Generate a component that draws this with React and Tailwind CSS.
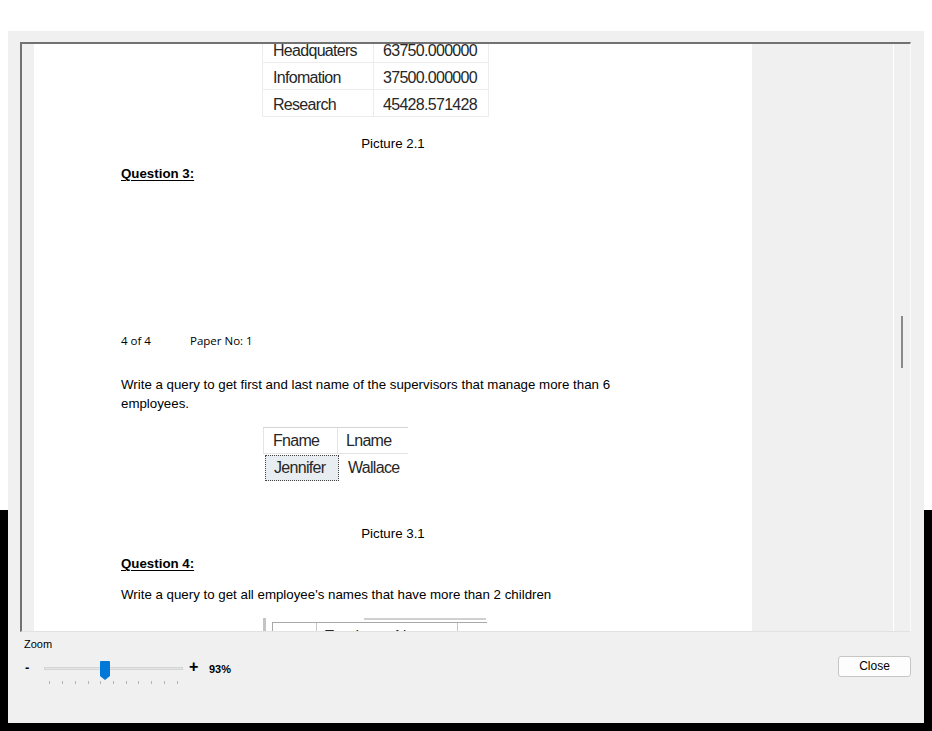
import React from 'react';

const ticks = Array.from({ length: 11 }, (_, k) => Math.round(6.3 + 12.74 * k) + 0.5);

function ZoomSlider() {
  return (
    <svg width="140" height="25" viewBox="0 0 140 25">
      <rect x="1.5" y="7.5" width="138" height="2" fill="#e7e7e7" stroke="#d4d4d4" />
      {ticks.map((x) => (
        <line key={x} x1={x} y1="21" x2={x} y2="24" stroke="#b4b4b4" strokeWidth="1" />
      ))}
      <path d="M57 2 Q57 1 58 1 H66 Q67 1 67 2 V16 L62 20 L57 16 Z" fill="#0078d7" />
    </svg>
  );
}

function SalaryTable() {
  const rows = [
    ['Headquaters', '63750.000000'],
    ['Infomation', '37500.000000'],
    ['Research', '45428.571428'],
  ];
  return (
    <div className="ml-[141px] w-[227px] border-l border-r border-[#ececec] text-[16px] tracking-[-0.7px] text-[#262626]">
      {rows.map(([dept, avg]) => (
        <div key={dept} className="flex h-[27px] border-b border-[#ececec]">
          <div className="w-[111px] border-r border-[#ececec] pl-[10px] pt-[3px] flex items-center">{dept}</div>
          <div className="pl-[9px] pt-[3px] flex items-center">{avg}</div>
        </div>
      ))}
    </div>
  );
}

function SupervisorTable() {
  return (
    <div className="ml-[142px] w-[145px] border-t border-[#d4d4d4] text-[16px] tracking-[-0.7px] text-[#262626]">
      <div className="flex h-[26px] border-b border-l border-[#e4e4e4]">
        <div className="w-[74px] border-r border-[#e4e4e4] pl-[9px] pt-[1px] flex items-center">Fname</div>
        <div className="pl-[8px] pt-[1px] flex items-center">Lname</div>
      </div>
      <div className="flex h-[27px]">
        <div className="w-[76px] pl-[2px] pt-[1px] flex">
          <div className="w-[74px] h-[26px] bg-[#e8edf2] border border-dotted border-[#444] pl-[8px] flex items-center">
            Jennifer
          </div>
        </div>
        <div className="pl-[9px] flex items-center">Wallace</div>
      </div>
    </div>
  );
}

function ChildrenTable() {
  return (
    <div className="ml-[142px] flex">
      <div className="w-[3px] h-[24px] bg-[#c4c4c4]" />
      <div className="ml-[6px] flex flex-col">
        <div className="ml-[92px] w-[122px] h-[2px] bg-[#d0d0d0]" />
        <div className="mt-[2px] flex border-t border-l border-[#a8a8a8] h-[20px] text-[16px] tracking-[-0.5px] text-[#262626]">
          <div className="w-[44px] border-r border-[#c8c8c8]" />
          <div className="w-[141px] border-r border-[#c8c8c8] pl-[7px] pt-[5px] leading-[18px]">Employee Name</div>
          <div className="w-[29px]" />
        </div>
      </div>
    </div>
  );
}

function DocumentPage() {
  return (
    <div className="w-[718px] bg-white overflow-hidden pl-[87px] pr-[87px] text-black">
      <div className="-mt-[8px] flex flex-col">
        <SalaryTable />

        <div className="mt-[19px] h-[16px] leading-[16px] text-center text-[13.3px]">Picture 2.1</div>

        <div className="mt-[14px] h-[16px] leading-[16px] text-[13.3px] font-bold underline underline-offset-2">
          Question 3:
        </div>

        <div className="mt-[151px] h-[16px] leading-[16px] flex text-[11.5px] font-['Open_Sans',sans-serif]">
          <span className="w-[69px]">4 of 4</span>
          <span>Paper No: 1</span>
        </div>

        <div className="mt-[26px] text-[13.3px] leading-[19px]">
          Write a query to get first and last name of the supervisors that manage more than 6
          <br />
          employees.
        </div>

        <div className="mt-[14px]">
          <SupervisorTable />
        </div>

        <div className="mt-[45px] h-[16px] leading-[16px] text-center text-[13.3px]">Picture 3.1</div>

        <div className="mt-[14px] h-[16px] leading-[16px] text-[13.3px] font-bold underline underline-offset-2">
          Question 4:
        </div>

        <div className="mt-[15px] h-[16px] leading-[16px] text-[13.3px]">
          Write a query to get all employee's names that have more than 2 children
        </div>

        <div className="mt-[15px]">
          <ChildrenTable />
        </div>
      </div>
    </div>
  );
}

function Viewer() {
  return (
    <div className="ml-[12px] mt-[11px] w-[891px] h-[590px] flex overflow-hidden border-t-2 border-l-2 border-t-[#727272] border-l-[#727272] border-r border-b border-r-[#fafafa] border-b-[#e2e2e2]">
      <div className="w-[12px] bg-[#f0f0f0]" />
      <DocumentPage />
      <div className="w-[141px] bg-[#f0f0f0]" />
      <div className="flex-1 bg-[#f0f0f0] border-l border-white pt-[272px] pl-[7px]">
        <div className="w-[2px] h-[52px] bg-[#8a8a8a]" />
      </div>
    </div>
  );
}

function Controls() {
  return (
    <div className="flex flex-col">
      <div className="pl-[16px] mt-[5px] h-[14px] leading-[14px] text-[11px] text-black">Zoom</div>
      <div className="mt-[5px] flex items-start">
        <div className="ml-[17px] mt-[4px] w-[18px] h-[16px] leading-[16px] text-[13px] font-bold">-</div>
        <div className="mt-[4px]">
          <ZoomSlider />
        </div>
        <div className="ml-[6px] mt-[3px] w-[20px] h-[16px] leading-[16px] text-[16px] font-bold">+</div>
        <div className="mt-[6px] h-[14px] leading-[14px] text-[11px] font-bold">93%</div>
        <button className="ml-auto mr-[13px] w-[73px] h-[21px] bg-[#fdfdfd] border border-[#c6c6c6] rounded-[3px] text-[12px] leading-[19px] text-black">
          Close
        </button>
      </div>
    </div>
  );
}

export default function App() {
  return (
    <div className="w-[932px] h-[731px] overflow-hidden pt-[31px] pl-[8px] bg-[linear-gradient(to_bottom,#ffffff_510px,#000000_510px)] font-['Liberation_Sans',Arial,sans-serif]">
      <div className="w-[916px] h-[692px] bg-[#f0f0f0] flex flex-col">
        <Viewer />
        <Controls />
      </div>
    </div>
  );
}
